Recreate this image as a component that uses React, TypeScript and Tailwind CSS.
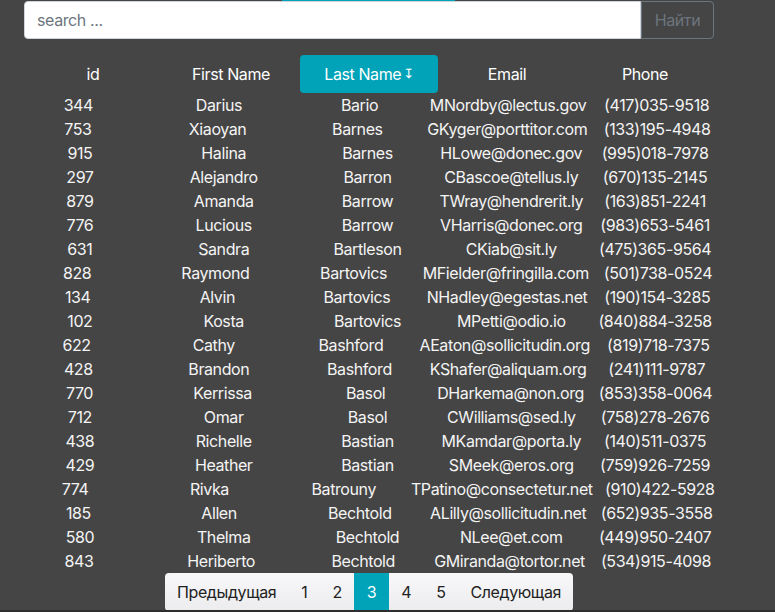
import React from "react";

type Person = {
  id: number;
  first: string;
  last: string;
  email: string;
  phone: string;
};

const people: Person[] = [
  { id: 344, first: "Darius", last: "Bario", email: "MNordby@lectus.gov", phone: "(417)035-9518" },
  { id: 753, first: "Xiaoyan", last: "Barnes", email: "GKyger@porttitor.com", phone: "(133)195-4948" },
  { id: 915, first: "Halina", last: "Barnes", email: "HLowe@donec.gov", phone: "(995)018-7978" },
  { id: 297, first: "Alejandro", last: "Barron", email: "CBascoe@tellus.ly", phone: "(670)135-2145" },
  { id: 879, first: "Amanda", last: "Barrow", email: "TWray@hendrerit.ly", phone: "(163)851-2241" },
  { id: 776, first: "Lucious", last: "Barrow", email: "VHarris@donec.org", phone: "(983)653-5461" },
  { id: 631, first: "Sandra", last: "Bartleson", email: "CKiab@sit.ly", phone: "(475)365-9564" },
  { id: 828, first: "Raymond", last: "Bartovics", email: "MFielder@fringilla.com", phone: "(501)738-0524" },
  { id: 134, first: "Alvin", last: "Bartovics", email: "NHadley@egestas.net", phone: "(190)154-3285" },
  { id: 102, first: "Kosta", last: "Bartovics", email: "MPetti@odio.io", phone: "(840)884-3258" },
  { id: 622, first: "Cathy", last: "Bashford", email: "AEaton@sollicitudin.org", phone: "(819)718-7375" },
  { id: 428, first: "Brandon", last: "Bashford", email: "KShafer@aliquam.org", phone: "(241)111-9787" },
  { id: 770, first: "Kerrissa", last: "Basol", email: "DHarkema@non.org", phone: "(853)358-0064" },
  { id: 712, first: "Omar", last: "Basol", email: "CWilliams@sed.ly", phone: "(758)278-2676" },
  { id: 438, first: "Richelle", last: "Bastian", email: "MKamdar@porta.ly", phone: "(140)511-0375" },
  { id: 429, first: "Heather", last: "Bastian", email: "SMeek@eros.org", phone: "(759)926-7259" },
  { id: 774, first: "Rivka", last: "Batrouny", email: "TPatino@consectetur.net", phone: "(910)422-5928" },
  { id: 185, first: "Allen", last: "Bechtold", email: "ALilly@sollicitudin.net", phone: "(652)935-3558" },
  { id: 580, first: "Thelma", last: "Bechtold", email: "NLee@et.com", phone: "(449)950-2407" },
  { id: 843, first: "Heriberto", last: "Bechtold", email: "GMiranda@tortor.net", phone: "(534)915-4098" },
];

const headers = ["id", "First Name", "Last Name", "Email", "Phone"];

const Row = ({ p }: { p: Person }) => {
  // each row sizes its own columns, like the original
  return (
    <div className="flex h-6 leading-6">
      <div className="flex-1 whitespace-nowrap text-center">{p.id}</div>
      <div className="flex-1 whitespace-nowrap text-center">{p.first}</div>
      <div className="flex-1 whitespace-nowrap text-center">{p.last}</div>
      <div className="flex-1 whitespace-nowrap text-center">{p.email}</div>
      <div className="flex-1 whitespace-nowrap text-center">{p.phone}</div>
    </div>
  );
};

const App = () => {
  return (
    <div
      className="h-[612px] w-full overflow-hidden border-b-2 border-[#2e2e2e] bg-[#454545] text-[16px] tracking-[-0.4px] text-[#f4f4f4]"
      style={{ fontFamily: "Inter, 'Noto Sans', sans-serif" }}
    >
      <div className="h-px">
        <div className="ml-[282px] h-[2px] w-[173px] bg-[#00a3b8]" />
      </div>

      <div className="ml-6 flex w-[690px]">
        <input
          className="h-[38px] flex-1 rounded-l border border-[#ced4da] bg-white px-3 text-[16px] tracking-[-0.4px] text-[#495057] placeholder:text-[#6c757d] outline-none"
          placeholder="search ..."
        />
        <button className="h-[38px] w-[73px] rounded-r border border-[#6c757d] text-[16px] text-[#6c757d]">
          Найти
        </button>
      </div>

      <div className="ml-6 mt-4 grid w-[690px] grid-cols-5">
        {headers.map((h) => (
          <div
            key={h}
            className={
              h === "Last Name"
                ? "flex h-[38px] items-center justify-center rounded bg-[#00a3b8] text-white"
                : "flex h-[38px] items-center justify-center text-white"
            }
          >
            {h}
            {h === "Last Name" && (
              <span
                className="ml-0.5 text-[13px]"
                style={{ fontFamily: "'DejaVu Sans', sans-serif" }}
              >
                ↧
              </span>
            )}
          </div>
        ))}
      </div>

      <div className="ml-2 w-[719px]">
        {people.map((p) => (
          <Row key={p.id} p={p} />
        ))}
      </div>

      <div className="ml-6 flex w-[690px] justify-center">
        <div className="flex h-[38px] overflow-hidden rounded bg-gradient-to-b from-[#f8f8fa] to-[#ececee] text-[#222]">
          <span className="flex items-center px-[12.5px]">Предыдущая</span>
          <span className="flex items-center px-[12.5px]">1</span>
          <span className="flex items-center px-[12.5px]">2</span>
          <span className="flex items-center bg-[#00a3b8] px-[12.5px] text-white">3</span>
          <span className="flex items-center px-[12.5px]">4</span>
          <span className="flex items-center px-[12.5px]">5</span>
          <span className="flex items-center px-[12.5px]">Следующая</span>
        </div>
      </div>
    </div>
  );
};

export default App;
